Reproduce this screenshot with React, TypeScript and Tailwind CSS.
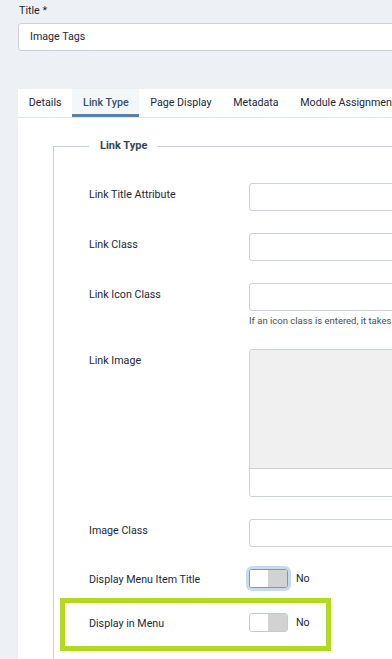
import React from "react";

// Menu item edit screen, "Link Type" tab, with the "Display in Menu" row highlighted.

const tabs = ["Details", "Link Type", "Page Display", "Metadata", "Module Assignment"];

function TextInput({ className = "" }: { className?: string }) {
  return (
    <div
      className={
        "h-[28px] w-[200px] shrink-0 rounded-[3px] border border-[#c9d1dc] bg-white " + className
      }
    />
  );
}

function Toggle({ focused = false }: { focused?: boolean }) {
  return (
    <div
      className={
        "flex h-[19px] w-[39px] overflow-hidden rounded-[3px] border bg-white " +
        (focused
          ? "border-[#6a9ad6] shadow-[0_0_0_3px_#c6daf1]"
          : "border-[#c3cad4]")
      }
    >
      <div className="flex-1 bg-white" />
      <div className="w-[19px] bg-[#d2d2d2]" />
    </div>
  );
}

function Label({ children }: { children: React.ReactNode }) {
  return <div className="w-[160px] shrink-0 pt-[4px] leading-[16px]">{children}</div>;
}

export default function App() {
  return (
    <div
      className="h-[659px] w-[392px] overflow-hidden bg-[#edf1f6] text-[10.7px] text-[#1c2735]"
      style={{ fontFamily: "Roboto, 'Liberation Sans', sans-serif" }}
    >
      <div className="pl-[18px] pt-[3px]">
        <div className="pl-[1px] leading-[16px]">Title *</div>
        <div className="mt-[4px] flex h-[28px] w-[400px] items-center rounded-[3px] border border-[#c9d1dc] bg-white pl-[11px]">
          Image Tags
        </div>

        <div className="mt-[38px] w-[400px] bg-white">
          <div className="flex h-[29px] border-b border-[#dde3ea]">
            {tabs.map((t) => (
              <div
                key={t}
                className={
                  "flex shrink-0 items-center whitespace-nowrap px-[10.8px] " +
                  (t === "Link Type"
                    ? "border-b-[3px] border-[#5b7fa6] bg-[#f4f7fa] pt-[3px] font-medium text-[#34506f]"
                    : "")
                }
              >
                {t}
              </div>
            ))}
          </div>

          <div className="pl-[35px] pt-[28px]">
            <div className="relative h-[520px] border-l border-t border-[#c7d0dc]">
              <div className="absolute -top-[9px] left-[35px] bg-white px-[11px] text-[11px] font-bold leading-[16px] text-[#3a4656]">
                Link Type
              </div>

              <div className="flex flex-col pl-[35px] pt-[36px]">
                <div className="flex">
                  <Label>Link Title Attribute</Label>
                  <TextInput />
                </div>
                <div className="mt-[22px] flex">
                  <Label>Link Class</Label>
                  <TextInput />
                </div>
                <div className="mt-[22px] flex">
                  <Label>Link Icon Class</Label>
                  <div className="flex flex-col">
                    <TextInput />
                    <div className="mt-[4px] whitespace-nowrap text-[9.5px] leading-[12px] text-[#4a4f55]">
                      If an icon class is entered, it takes precedence over the image.
                    </div>
                  </div>
                </div>
                <div className="mt-[22px] flex">
                  <Label>Link Image</Label>
                  <div className="flex w-[200px] flex-col overflow-hidden rounded-[3px] border border-[#c9d1dc]">
                    <div className="h-[119px] border-b border-[#c9d1dc] bg-[#f0f0f0]" />
                    <div className="h-[27px] bg-white" />
                  </div>
                </div>
                <div className="mt-[22px] flex">
                  <Label>Image Class</Label>
                  <TextInput />
                </div>
                <div className="mt-[22px] flex items-center">
                  <div className="w-[160px] shrink-0 pt-[2px] leading-[16px]">Display Menu Item Title</div>
                  <Toggle focused />
                  <span className="ml-[8px] leading-[16px]">No</span>
                </div>
                <div className="relative mt-[25px] flex items-center">
                  <div className="pointer-events-none absolute -left-[29px] -top-[15px] h-[53px] w-[271px] border-[5px] border-[#b3da21]" />
                  <div className="w-[160px] shrink-0 pt-[3px] leading-[16px]">Display in Menu</div>
                  <Toggle />
                  <span className="ml-[8px] leading-[16px]">No</span>
                </div>
              </div>
            </div>
          </div>
        </div>
      </div>
    </div>
  );
}
